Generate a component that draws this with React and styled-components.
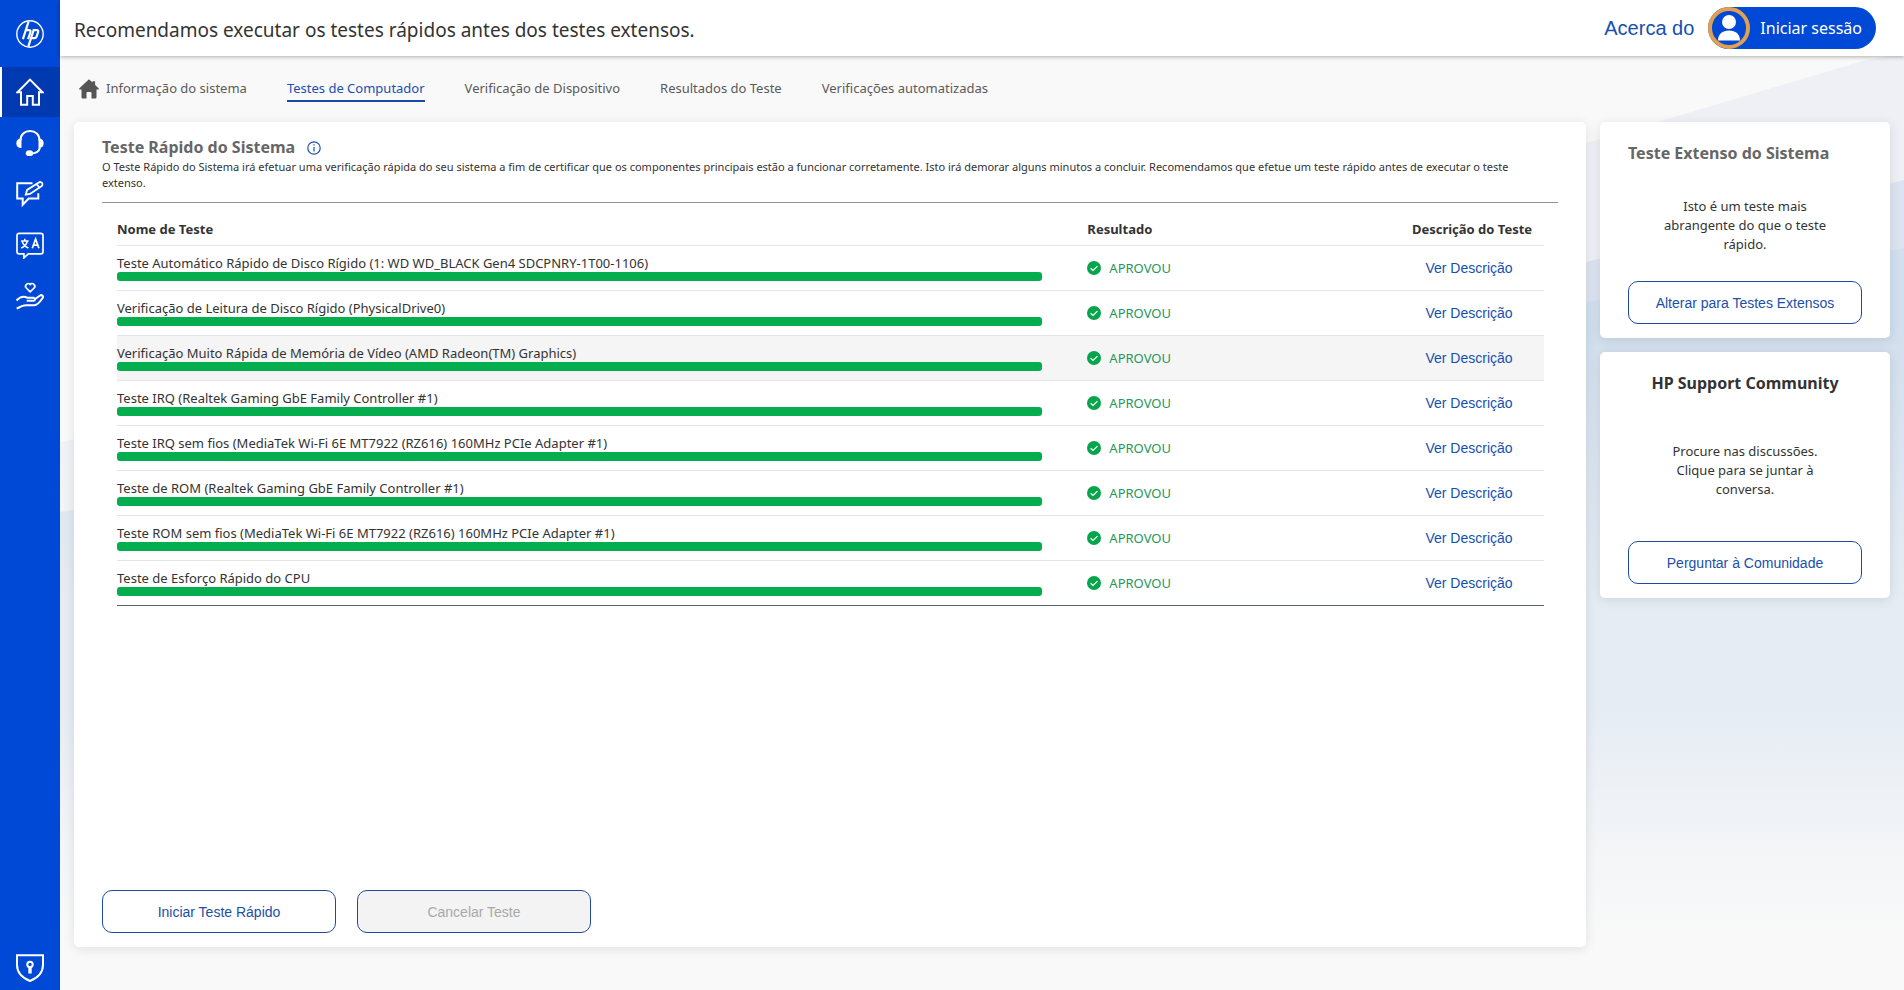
import styled, { createGlobalStyle, css } from 'styled-components';

const TABS = [
  'Informação do sistema',
  'Testes de Computador',
  'Verificação de Dispositivo',
  'Resultados do Teste',
  'Verificações automatizadas',
];

const TESTS = [
  'Teste Automático Rápido de Disco Rígido (1: WD WD_BLACK Gen4 SDCPNRY-1T00-1106)',
  'Verificação de Leitura de Disco Rígido (PhysicalDrive0)',
  'Verificação Muito Rápida de Memória de Vídeo (AMD Radeon(TM) Graphics)',
  'Teste IRQ (Realtek Gaming GbE Family Controller #1)',
  'Teste IRQ sem fios (MediaTek Wi-Fi 6E MT7922 (RZ616) 160MHz PCIe Adapter #1)',
  'Teste de ROM (Realtek Gaming GbE Family Controller #1)',
  'Teste ROM sem fios (MediaTek Wi-Fi 6E MT7922 (RZ616) 160MHz PCIe Adapter #1)',
  'Teste de Esforço Rápido do CPU',
];

const LineIcon = ({ children, size = 28, strokeWidth = 2 }) => (
  <svg
    width={size}
    height={size}
    viewBox="0 0 28 28"
    fill="none"
    stroke="currentColor"
    strokeWidth={strokeWidth}
    aria-hidden="true"
  >
    {children}
  </svg>
);

const HpLogo = () => (
  <LineIcon strokeWidth={2.2}>
    <circle cx="14" cy="14" r="13.2" strokeWidth="1.4" />
    <path d="M12.6 1.5 6.9 19.2M9.8 10.1h3.1c1.5 0 1.9.8 1.5 2.1l-2.3 7" />
    <path d="M18 9 12.3 26.6M17.6 10.1h3c1.5 0 1.9.8 1.5 2.1l-1.5 4.5c-.4 1.1-1 1.5-2.2 1.5h-3.2" />
  </LineIcon>
);

const HomeIcon = () => (
  <LineIcon>
    <path d="M1.5 14.2 14 1.6l12.5 12.6H23v12.6h-6.2v-8.7h-5.6v8.7H5V14.2z" />
  </LineIcon>
);

const HeadsetIcon = () => (
  <LineIcon>
    <path d="M4.5 11.5C4.5 5.500 8.500 2 14 2s9.5 3.500 9.5 9.500M24 18.500c-1 4-4 6-9 6" />
    <path
      d="M5.5 9.5V19C2 19 .3 17.2.3 14.3S2 9.500 5.500 9.500zM22.500 9.500V19c3.500 0 5.200-1.800 5.200-4.700s-1.700-4.800-5.200-4.800z"
      fill="currentColor"
      stroke="none"
    />
    <ellipse cx="13.5" cy="24.2" rx="3.7" ry="2.9" fill="currentColor" stroke="none" />
  </LineIcon>
);

const FeedbackIcon = () => (
  <LineIcon>
    <path d="M16.5 3.3H1.2v15.2h5.500v6.200l6-6.200h9.600v-5.300" />
    <path
      d="m9.8 14.6 1.3-4.7L22.800 2.400c1.100-.7 2.600-.5 3.300.6.7 1.100.4 2.500-.7 3.200L14 13.900zM20.800 4l2.500 3.700"
      strokeWidth="1.8"
    />
  </LineIcon>
);

const TranslateIcon = () => (
  <LineIcon strokeWidth={1.7}>
    <path d="M3.3 2.3h21.4c1.4 0 2.3.9 2.3 2.2v16.2c0 1.4-.9 2.2-2.3 2.2H12.300l-4.400 4v-4H3.300C1.900 22.900 1 22.100 1 20.700V4.500c0-1.300.9-2.200 2.300-2.200z" />
    <path
      d="M5 10h7.600M8.800 7.800V10M6.200 10.200c.8 3 3 5.500 6.200 6.800M11.400 10.200c-.8 3-3 5.500-6.200 6.800"
      strokeWidth="1.5"
    />
    <path d="m16.300 17.300 3.300-9.300 3.300 9.300M17.400 14.200h4.400" />
  </LineIcon>
);

const CareIcon = () => (
  <LineIcon>
    <path
      d="M14.2 9.800 10.300 6C8 3.500 11.800-.3 14.200 2.500c2.400-2.800 6.200 1 3.900 3.500z"
      strokeWidth="1.7"
    />
    <path d="M.5 18.500c4-4.300 7.500-4.500 11-2.700h6c1.900 0 1.900 3 0 3h-6.800" />
    <path d="m18.500 17.500 5.200-3.800c2-1.400 4.200.3 2.900 2.300-2.400 3.600-4.600 7.200-8.300 7.200h-8.100c-3.500 0-5.500 1-9.500 3.500" />
  </LineIcon>
);

const ShieldIcon = () => (
  <LineIcon>
    <path d="M1 1.200h26v9.600C27 18.300 21.500 24 14 27 6.500 24 1 18.300 1 10.800z" />
    <circle cx="14" cy="10.5" r="2.7" />
    <path d="M14 13.500v6" strokeWidth="3.4" />
  </LineIcon>
);

const HouseSolidIcon = () => (
  <svg width="20" height="20" viewBox="0 0 20 20" fill="#555" aria-hidden="true">
    <path d="M10 .3 13.500 3.500V2.200h2.600v3.700l3.500 3.400c.5.600.2 1.300-.6 1.300h-1.500v7.700c0 .9-.5 1.300-1.300 1.300h-3.700v-5.400c0-.8-.4-1.200-1.200-1.200H8.700c-.8 0-1.200.4-1.200 1.200v5.400H3.800c-.8 0-1.300-.4-1.300-1.300v-7.700H1c-.8 0-1.100-.7-.6-1.300z" />
  </svg>
);

const InfoIcon = () => (
  <svg width="14" height="14" viewBox="0 0 14 14" fill="none" stroke="#1d4fb4" aria-hidden="true">
    <circle cx="7" cy="7" r="6.2" strokeWidth="1.2" />
    <path d="M7 6v4.500M7 3.300v1.300" strokeWidth="1.2" />
  </svg>
);

const CheckIcon = () => (
  <svg width="14" height="14" viewBox="0 0 14 14" fill="none" aria-hidden="true">
    <circle cx="7" cy="7" r="7" fill="#08a44c" />
    <path d="m3.600 7.200 2.400 2.300 4.500-4.400" stroke="#fff" strokeWidth="1.2" />
  </svg>
);

const PersonIcon = () => (
  <svg width="24" height="28" viewBox="0 0 24 28" fill="#fff" aria-hidden="true">
    <circle cx="12" cy="8" r="7" />
    <path d="M1 26.500C1 20 5.500 16.500 12 16.500S23 20 23 26.500z" />
  </svg>
);

const NAV = [
  { label: 'Início', icon: <HomeIcon />, active: true },
  { label: 'Suporte', icon: <HeadsetIcon /> },
  { label: 'Comentários', icon: <FeedbackIcon /> },
  { label: 'Idioma', icon: <TranslateIcon /> },
  { label: 'HP Care', icon: <CareIcon /> },
];

const Sidebar = () => (
  <SidebarContainer aria-label="Principal">
    <LogoContainer>
      <HpLogo />
    </LogoContainer>
    <NavList>
      {NAV.map(({ label, icon, active }) => (
        <NavButton key={label} type="button" aria-label={label} $active={active}>
          {icon}
        </NavButton>
      ))}
    </NavList>
    <PrivacyButton type="button" aria-label="Privacidade">
      <ShieldIcon />
    </PrivacyButton>
  </SidebarContainer>
);

const TopBar = () => (
  <TopBarContainer>
    <PageTitle>Recomendamos executar os testes rápidos antes dos testes extensos.</PageTitle>
    <AboutLink href="#acerca">Acerca do</AboutLink>
    <SignInButton type="button">
      <Avatar>
        <PersonIcon />
      </Avatar>
      Iniciar sessão
    </SignInButton>
  </TopBarContainer>
);

const TestRow = ({ name, highlighted }) => (
  <BodyRow $highlighted={highlighted}>
    <NameCell>
      {name}
      <ProgressBar />
    </NameCell>
    <td>
      <Result>
        <CheckIcon />
        APROVOU
      </Result>
    </td>
    <DescriptionCell>
      <DescriptionLink href="#descricao">Ver Descrição</DescriptionLink>
    </DescriptionCell>
  </BodyRow>
);

const QuickTest = () => (
  <QuickTestCard>
    <TitleContainer>
      <CardTitle>Teste Rápido do Sistema</CardTitle>
      <InfoIcon />
    </TitleContainer>
    <Intro>
      O Teste Rápido do Sistema irá efetuar uma verificação rápida do seu sistema a fim de
      certificar que os componentes principais estão a funcionar corretamente. Isto irá demorar
      alguns minutos a concluir. Recomendamos que efetue um teste rápido antes de executar o teste
      extenso.
    </Intro>
    <TableContainer>
      <TestTable>
        <thead>
          <tr>
            <HeadCell $width="68%">Nome de Teste</HeadCell>
            <HeadCell>Resultado</HeadCell>
            <HeadCell $width="144px" $center>
              Descrição do Teste
            </HeadCell>
          </tr>
        </thead>
        <tbody>
          {TESTS.map((name, i) => (
            <TestRow key={name} name={name} highlighted={i === 2} />
          ))}
        </tbody>
      </TestTable>
    </TableContainer>
    <ActionContainer>
      <OutlineButton type="button">Iniciar Teste Rápido</OutlineButton>
      <OutlineButton type="button" disabled>
        Cancelar Teste
      </OutlineButton>
    </ActionContainer>
  </QuickTestCard>
);

const Backdrop = () => (
  <BackdropSvg viewBox="0 0 1844 934" preserveAspectRatio="none" aria-hidden="true">
    <defs>
      <linearGradient id="fade" x1="0" y1="0" x2="0" y2="1">
        <stop offset="0.3" stopColor="#f9f9f9" stopOpacity="0" />
        <stop offset="0.58" stopColor="#f9f9f9" stopOpacity="0.5" />
        <stop offset="0.7" stopColor="#f9f9f9" stopOpacity="0.5" />
        <stop offset="0.76" stopColor="#f9f9f9" stopOpacity="0.65" />
        <stop offset="0.85" stopColor="#f9f9f9" stopOpacity="0.85" />
        <stop offset="0.94" stopColor="#f9f9f9" stopOpacity="1" />
      </linearGradient>
    </defs>
    <path d="M0 386 1527 87 1806 4l38-6v936H0z" fill="#eef0f6" />
    <path d="M0 456 1527 206l317-82v810H0z" fill="#dde3f0" />
    <path d="M0 456 1527 246l317-54v742H0z" fill="#d2dfee" />
    <path d="M0 0h1844v934H0z" fill="url(#fade)" />
  </BackdropSvg>
);

const App = () => (
  <>
    <GlobalStyle />
    <Layout>
      <Sidebar />
      <Main>
        <TopBar />
        <Content>
          <Backdrop />
          <TabList>
            <HouseSolidIcon />
            {TABS.map((tab, i) => (
              <TabLink key={tab} href="#tab" $active={i === 1}>
                {tab}
              </TabLink>
            ))}
          </TabList>
          <Panels>
            <QuickTest />
            <SideColumn>
              <SideCard>
                <CardTitle>Teste Extenso do Sistema</CardTitle>
                <SideText>Isto é um teste mais abrangente do que o teste rápido.</SideText>
                <OutlineButton type="button">Alterar para Testes Extensos</OutlineButton>
              </SideCard>
              <SideCard $wide>
                <CardTitle $dark>HP Support Community</CardTitle>
                <SideText>Procure nas discussões. Clique para se juntar à conversa.</SideText>
                <OutlineButton type="button">Perguntar à Comunidade</OutlineButton>
              </SideCard>
            </SideColumn>
          </Panels>
        </Content>
      </Main>
    </Layout>
  </>
);

export default App;

const GlobalStyle = createGlobalStyle`
  * {
    box-sizing: border-box;
  }

  body {
    margin: 0;
    font-family: 'Noto Sans', 'Open Sans', sans-serif;
    font-size: 13px;
    color: #333;
    background: #f9f9f9;
  }

  button {
    font-family: inherit;
    cursor: pointer;
  }

  a {
    text-decoration: none;
  }

  svg {
    display: block;
    flex-shrink: 0;
  }
`;

const Layout = styled.div`
  display: flex;
  min-height: 100vh;
`;

const SidebarContainer = styled.nav`
  display: flex;
  flex-direction: column;
  flex-shrink: 0;
  width: 60px;
  color: #fff;
  background: #0049d7;
`;

const LogoContainer = styled.div`
  display: flex;
  justify-content: center;
  align-items: center;
  height: 67px;
`;

const NavList = styled.div`
  display: flex;
  flex-direction: column;
  gap: 1px;
`;

const iconButton = css`
  display: flex;
  justify-content: center;
  align-items: center;
  border: 0;
  color: inherit;
  background: none;
`;

const NavButton = styled.button`
  ${iconButton}
  height: 50px;
  padding: 0;

  ${({ $active }) =>
    $active &&
    css`
      background: #0039b0;
      box-shadow: inset 2px 0 0 #fff;
    `}
`;

const PrivacyButton = styled.button`
  ${iconButton}
  margin-top: auto;
  padding: 8px 0;
`;

const Main = styled.main`
  display: flex;
  flex-direction: column;
  flex: 1;
  min-width: 0;
`;

const TopBarContainer = styled.header`
  display: flex;
  align-items: center;
  height: 56px;
  padding: 0 28px 0 14px;
  background: #fff;
  box-shadow: 0 1px 4px rgba(0, 0, 0, 0.3);
  z-index: 1;
`;

const PageTitle = styled.h1`
  margin: 0 auto 0 0;
  padding-top: 3px;
  font-size: 19px;
  font-weight: 400;
`;

const AboutLink = styled.a`
  margin-right: 14px;
  font-family: 'Liberation Sans', sans-serif;
  font-size: 20px;
  color: #1650b0;
`;

const SignInButton = styled.button`
  display: flex;
  align-items: center;
  gap: 10px;
  height: 42px;
  padding: 0 14px 0 0;
  border: 0;
  border-radius: 21px;
  font-size: 16px;
  color: #fff;
  background: #0049d7;
`;

const Avatar = styled.span`
  display: flex;
  justify-content: center;
  align-items: center;
  width: 42px;
  height: 42px;
  border: 4px solid #dfa050;
  border-radius: 50%;
`;

const Content = styled.div`
  position: relative;
  display: flex;
  flex-direction: column;
  flex: 1;
  padding: 0 14px 43px;
  isolation: isolate;
`;

const BackdropSvg = styled.svg`
  position: absolute;
  inset: 0;
  width: 100%;
  height: 100%;
  z-index: -1;
`;

const TabList = styled.nav`
  display: flex;
  align-items: center;
  gap: 40px;
  height: 66px;
  padding-left: 5px;

  svg {
    margin-right: -33px;
  }
`;

const TabLink = styled.a`
  line-height: 24px;
  border-bottom: 2px solid transparent;
  color: #5a5a5a;

  ${({ $active }) =>
    $active &&
    css`
      color: #1a4fb0;
      border-color: #1a48a8;
    `}
`;

const Panels = styled.div`
  display: flex;
  flex: 1;
  gap: 14px;
`;

const Card = styled.section`
  display: flex;
  flex-direction: column;
  border-radius: 5px;
  background: #fff;
  box-shadow: 0 2px 12px rgba(0, 0, 0, 0.1);
`;

const QuickTestCard = styled(Card)`
  flex: 1;
  min-width: 0;
  padding: 14px 28px;
`;

const TitleContainer = styled.div`
  display: flex;
  align-items: center;
  gap: 12px;
`;

const CardTitle = styled.h2`
  margin: 0;
  font-size: 16px;
  line-height: 23px;
  font-weight: 700;
  color: ${({ $dark }) => ($dark ? '#333' : '#666')};
`;

const Intro = styled.p`
  margin: 0;
  padding: 0 16px 11px 0;
  border-bottom: 1px solid #8f9396;
  font-size: 11px;
  line-height: 16px;
`;

const TableContainer = styled.div`
  flex: 1;
  padding: 0 14px 14px 15px;
`;

const TestTable = styled.table`
  width: 100%;
  table-layout: fixed;
  border-collapse: collapse;
  border-bottom: 1px solid #5c6068;

  td {
    padding: 0;
  }
`;

const HeadCell = styled.th`
  width: ${({ $width }) => $width};
  height: 42px;
  padding: 10px 0 0;
  text-align: ${({ $center }) => ($center ? 'center' : 'left')};
`;

const BodyRow = styled.tr`
  height: 45px;
  border-top: 1px solid #e4e5e6;
  background: ${({ $highlighted }) => ($highlighted ? '#f5f5f5' : 'none')};
`;

const NameCell = styled.td`
  line-height: 18px;
`;

const ProgressBar = styled.div`
  width: calc(100% - 45px);
  height: 9px;
  border-radius: 3px;
  background: #04ad4e;
`;

const Result = styled.span`
  display: flex;
  align-items: center;
  gap: 8px;
  color: #25985a;
`;

const DescriptionCell = styled.td`
  text-align: center;
`;

const DescriptionLink = styled.a`
  padding-right: 6px;
  font-family: 'Liberation Sans', sans-serif;
  font-size: 14px;
  color: #1450b0;
`;

const ActionContainer = styled.div`
  display: flex;
  gap: 21px;
`;

const OutlineButton = styled.button`
  width: 234px;
  height: 43px;
  border: 1px solid #1f4a9c;
  border-radius: 10px;
  font-family: 'Liberation Sans', sans-serif;
  font-size: 14px;
  color: #1b4fa8;
  background: #fff;

  &:disabled {
    color: #a9a9a9;
    background: #f3f3f3;
    cursor: default;
  }
`;

const SideColumn = styled.aside`
  display: flex;
  flex-direction: column;
  flex-shrink: 0;
  gap: 14px;
  width: 290px;
`;

const SideCard = styled(Card)`
  gap: ${({ $wide }) => ($wide ? '42px' : '27px')};
  padding: 20px 28px 14px;
  text-align: ${({ $wide }) => ($wide ? 'center' : 'left')};
`;

const SideText = styled.p`
  margin: 0;
  padding: 5px 28px 0;
  line-height: 19px;
  text-align: center;
`;
